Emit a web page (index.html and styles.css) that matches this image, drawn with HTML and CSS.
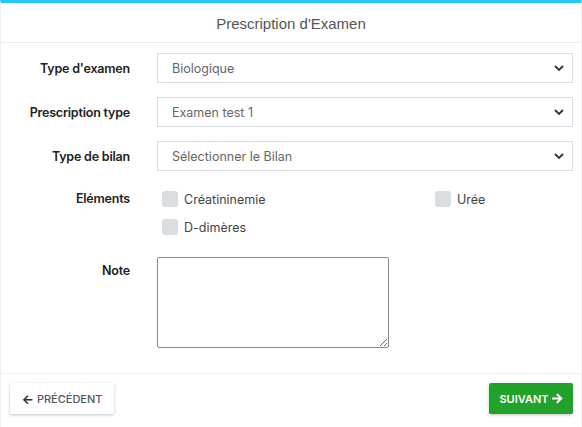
FILE: index.html
```html
<!DOCTYPE html>
<html lang="fr">
<head>
<meta charset="utf-8">
<title>Prescription d'Examen</title>
<link rel="stylesheet" href="styles.css">
</head>
<body>
<div class="card">
  <div class="card-header">Prescription d'Examen</div>
  <div class="card-body">
    <div class="row">
      <label class="lbl">Type d'examen</label>
      <div class="select"><span>Biologique</span><svg class="chev" viewBox="0 0 10 6" width="10" height="6"><path d="M1 1l4 4 4-4" fill="none" stroke="#333" stroke-width="1.8"/></svg></div>
    </div>
    <div class="row">
      <label class="lbl">Prescription type</label>
      <div class="select"><span>Examen test 1</span><svg class="chev" viewBox="0 0 10 6" width="10" height="6"><path d="M1 1l4 4 4-4" fill="none" stroke="#333" stroke-width="1.8"/></svg></div>
    </div>
    <div class="row">
      <label class="lbl">Type de bilan</label>
      <div class="select"><span>Sélectionner le Bilan</span><svg class="chev" viewBox="0 0 10 6" width="10" height="6"><path d="M1 1l4 4 4-4" fill="none" stroke="#333" stroke-width="1.8"/></svg></div>
    </div>
    <div class="row row-top row-checks">
      <label class="lbl">Eléments</label>
      <div class="checks">
        <div class="check"><span class="box"></span><span>Créatininemie</span></div>
        <div class="check"><span class="box"></span><span>Urée</span></div>
        <div class="check"><span class="box"></span><span>D-dimères</span></div>
      </div>
    </div>
    <div class="row row-top row-note">
      <label class="lbl lbl-note">Note</label>
      <textarea class="note"></textarea>
    </div>
  </div>
  <div class="card-footer">
    <button class="btn btn-light"><span class="arr">&#8592;</span>PRÉCÉDENT</button>
    <button class="btn btn-green">SUIVANT<svg class="arr-r" viewBox="0 0 12 12" width="11" height="11"><path d="M1 6h9M6 2l4 4-4 4" fill="none" stroke="#fff" stroke-width="2.2" stroke-linecap="square"/></svg></button>
  </div>
</div>
</body>
</html>
```

FILE: styles.css
```css
* { box-sizing: border-box; }
html, body { margin: 0; padding: 0; background: #fff; }
body { font-family: Inter, Roboto, "Liberation Sans", sans-serif; color: #333; width: 582px; height: 427px; overflow: hidden; }

.card {
  border-top: 3px solid #22c8ef;
  border-left: 1px solid #f0f0f0;
  border-right: 1px solid #f0f0f0;
  height: 427px;
}
.card-header {
  height: 40px;
  border-bottom: 1px solid #ececec;
  text-align: center;
  font-family: "Liberation Sans", Arial, sans-serif;
  font-size: 15px;
  color: #555;
  line-height: 41px;
}
.card-body {
  padding: 10px 8px 0 0;
  height: 331px;
  border-bottom: 1px solid #f0f0f0;
}
.row {
  display: grid;
  grid-template-columns: 129px 1fr;
  column-gap: 27px;
  align-items: center;
  margin-bottom: 14px;
}
.row-top { align-items: start; }
.lbl {
  text-align: right;
  font-weight: 600;
  font-size: 12.5px;
  color: #222;
  letter-spacing: -0.2px;
}
.row-checks { margin-top: 20px; }
.row-checks .lbl { line-height: 16px; }
.lbl-note { padding-top: 6px; }
.select {
  height: 30px;
  border: 1px solid #dcdce6;
  display: flex;
  align-items: center;
  justify-content: space-between;
  padding: 0 8px 0 14px;
  font-size: 12.5px;
  color: #666;
}
.chev { display: block; }
.checks {
  display: grid;
  grid-template-columns: 273px 1fr;
  row-gap: 12px;
  padding-left: 5px;
}
.check {
  display: flex;
  align-items: center;
  gap: 6px;
  font-size: 12.5px;
  color: #444;
  height: 16px;
}
.box {
  width: 16px;
  height: 16px;
  border-radius: 3px;
  background: #d9dee1;
}
.row-note { margin-top: 22px; }
.note {
  display: block;
  width: 232px;
  height: 91px;
  border: 1px solid #8a8a8a;
  border-radius: 2px;
  resize: both;
  margin: 0;
}
.card-footer {
  display: flex;
  justify-content: space-between;
  padding: 9px 8px 0 8px;
}
.btn {
  font-family: Inter, Roboto, "Liberation Sans", sans-serif;
  font-size: 11px;
  font-weight: 500;
  height: 31px;
  border: none;
  border-radius: 2px;
  display: flex;
  align-items: center;
  gap: 3px;
  cursor: pointer;
}
.btn-light {
  background: #fff;
  color: #555;
  width: 104px;
  justify-content: center;
  box-shadow: 0 1px 3px rgba(0,0,0,0.25);
  margin-left: 1px;
}
.arr { font-size: 13px; color: #333; font-weight: 700; }
.btn-green {
  background: #22a22b;
  color: #fff;
  width: 84px;
  justify-content: center;
  font-weight: 600;
  box-shadow: 0 1px 3px rgba(0,0,0,0.25);
}
.arr-r { display: block; }
```
